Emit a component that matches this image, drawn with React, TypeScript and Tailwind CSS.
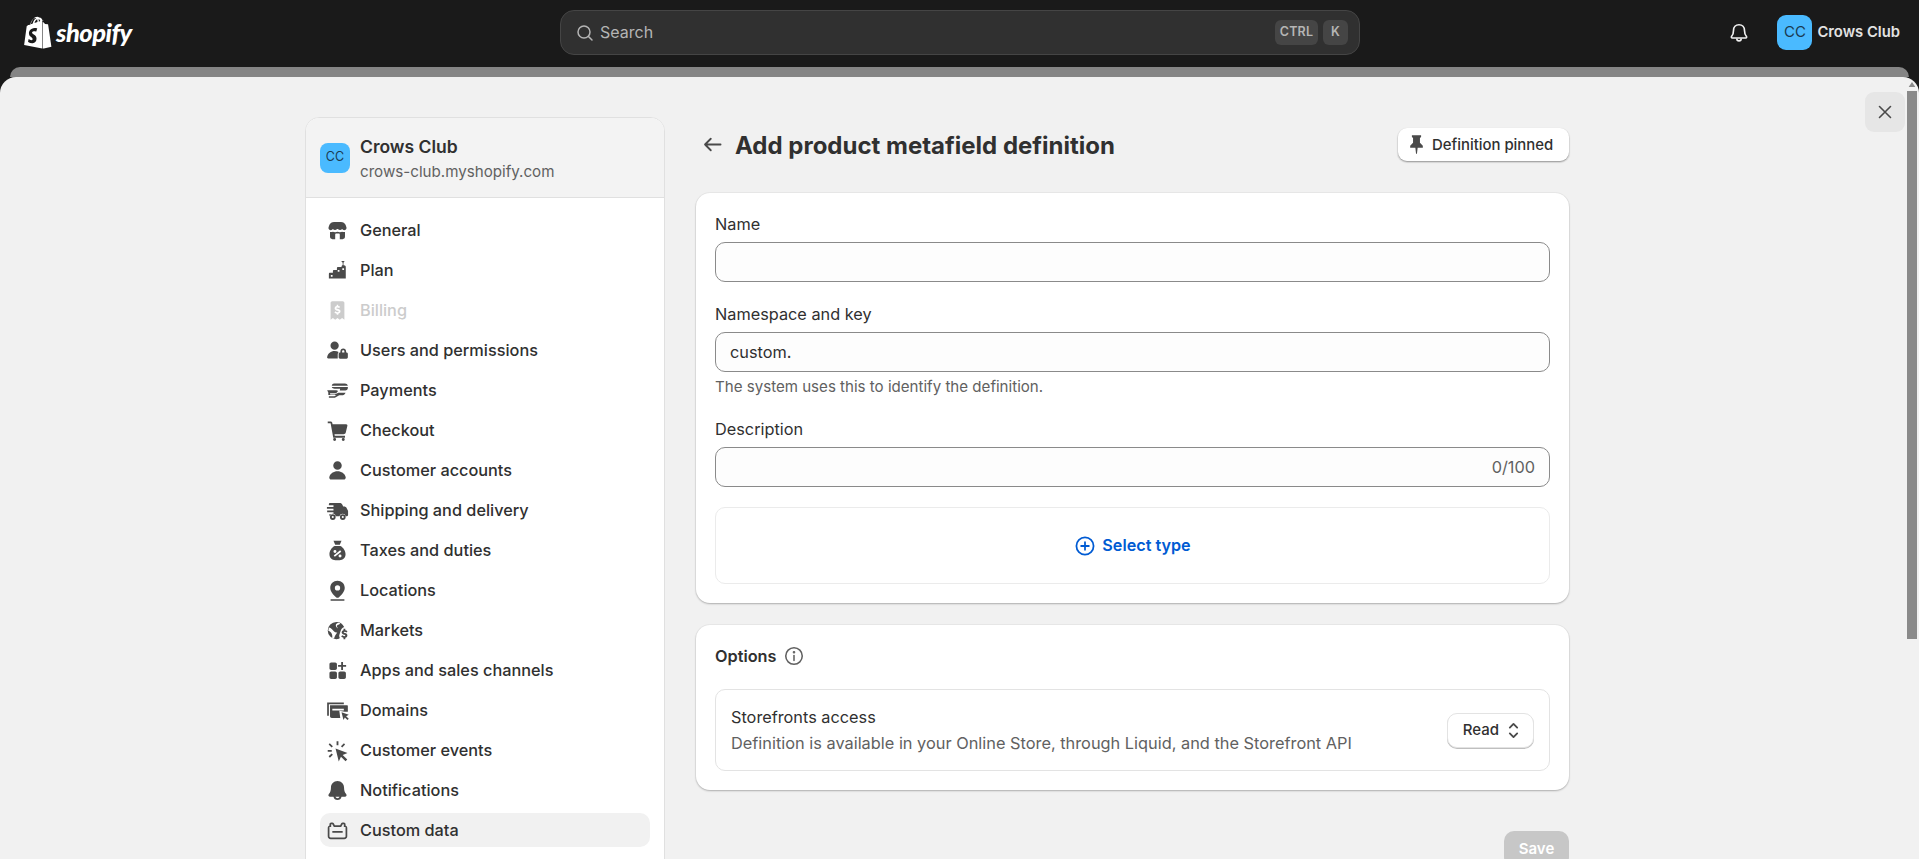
import React from "react";

const font = "[font-family:Inter,'Liberation_Sans',sans-serif]";

const Fill = ({ d, className = "" }: { d: string; className?: string }) => (
  <svg viewBox="0 0 20 20" className={`h-[23px] w-[23px] shrink-0 ${className}`} fill="currentColor">
    <path fillRule="evenodd" clipRule="evenodd" d={d} />
  </svg>
);

const items: { label: string; d: string; disabled?: boolean; active?: boolean }[] = [
  { label: "General", d: "M7 2.500h6c2 0 3.300 1 4 2.600l.7 1.900c.3.900.1 1.600-.4 2.100-.9.900-2.600.800-3.300-.3-.8 1.100-2.800 1.100-3.600 0h-.8c-.8 1.100-2.800 1.100-3.600 0-.7 1.100-2.400 1.200-3.300.3-.5-.5-.7-1.200-.4-2.100L3 5.100C3.700 3.500 5 2.500 7 2.500ZM3.500 11.300c.9.200 1.800.100 2.500-.3.900.5 2.800.6 4 0 1.200.6 3.100.5 4 0 .7.400 1.600.500 2.500.3V15.500c0 1.100-.9 2-2 2h-9c-1.100 0-2-.9-2-2V11.300ZM8 13.500V17.500h4V13.500c0-.6-.4-1-1-1H9c-.6 0-1 .4-1 1Z" },
  { label: "Plan", d: "M13.200 1.800h3l-1 1.400v2.300h.5c.8 0 1.500.7 1.500 1.500v10H2.500V13c0-.6.400-1 1-1h2.500V10.500c0-.6.400-1 1-1H9.500V8c0-.6.400-1 1-1h3V6.800c0-.7.300-1.300 1-1.300V3.200l-1.300-1.400ZM4.200 14v1.500h1.500V14H4.200Zm6-4.500V11h1.500V9.500H10.200Zm4-1.500v1.500h1.500V8H14.200Z" },
  { label: "Billing", disabled: true, d: "M4 3.500c0-.8.700-1.500 1.500-1.500h9c.8 0 1.500.700 1.500 1.500V18l-2-1.500-2 1.500-2-1.500L8 18l-2-1.500L4 18V3.500ZM9.300 5v1c-1.100.2-1.800 1-1.800 2 0 1.200.9 1.800 2.400 2.200.9.200 1.100.4 1.100.7s-.4.600-1 .6c-.7 0-1.300-.3-1.800-.8l-.9 1.100c.5.500 1.200.9 2 1v1h1.400v-1c1.200-.2 1.900-1 1.900-2.100 0-1.200-.9-1.800-2.500-2.200-.8-.2-1.100-.4-1.100-.7s.3-.5.900-.5c.5 0 1.100.2 1.600.6l.8-1.100c-.5-.4-1.100-.7-1.700-.8V5H9.300Z" },
  { label: "Users and permissions", d: "M7.500 2.200a3.600 3.600 0 1 1 0 7.200 3.600 3.600 0 0 1 0-7.200ZM7.500 10.500c1.300 0 2.500.3 3.500.8-.5.500-.8 1.200-.8 1.900v3.800H2c-.8 0-1.200-.6-1-1.300.6-3.100 3.200-5.200 6.500-5.200ZM15 8.300c1.400 0 2.500 1.100 2.500 2.500V11.700h.3c.7 0 1.200.6 1.200 1.200v3c0 .7-.5 1.200-1.200 1.200H12.200c-.7 0-1.200-.5-1.200-1.200v-3c0-.6.500-1.200 1.200-1.200h.3V10.800c0-1.400 1.100-2.500 2.500-2.500ZM14 11.700h2V10.800c0-.6-.4-1-1-1s-1 .4-1 1V11.700Z" },
  { label: "Payments", d: "M7 4h9.500c1.200 0 2.200.7 2.500 1.800H5c.3-1.100 1-1.800 2-1.800ZM5 7h14v.8c0 1.200-1 2.200-2.200 2.200H12l.3-1.500H7.500C6.300 8.500 5.300 8 5 7ZM1 9.700h6.500c1 0 1.800.1 2.400.2.500.1.500.9-.1 1.500l-1 1H3.500l.2 1H7.500l3.300-1.500H17c-.4 1.400-1.800 2.300-3.500 2.300h-2l-3.800 2H2.500v-1.300h4.800l1.700-1H2V11.800L1 9.700Z" },
  { label: "Checkout", d: "M1.500 2.200H4c.7 0 1.300.5 1.500 1.200L5.700 4.500H17.500c.8 0 1.300.7 1.100 1.400l-1.400 5.900c-.2.9-1 1.500-1.900 1.500H7.400l.2 1.200H16.500V16.200H6.300L4 3.700H1.500V2.200ZM7.500 16.500a1.300 1.300 0 1 1 0 2.600 1.300 1.300 0 0 1 0-2.600Zm7.500 0a1.300 1.300 0 1 1 0 2.600 1.300 1.300 0 0 1 0-2.600Z" },
  { label: "Customer accounts", d: "M10 2a3.700 3.700 0 1 1 0 7.400A3.700 3.700 0 0 1 10 2ZM10 10.700c3.500 0 6.300 2 7.100 4.900.3 1.100-.5 2.300-1.700 2.300H4.600c-1.200 0-2-1.200-1.700-2.300.8-2.900 3.600-4.900 7.100-4.900Z" },
  { label: "Shipping and delivery", d: "M6.500 3.500h5.500c.9 0 1.700.5 2.100 1.300l.9 1.700h.7c1 0 1.800.5 2.200 1.300l1 2c.2.300.3.600.3 1V14c0 .6-.4 1-1 1h-.9a2.900 2.900 0 0 0-5.600 0H8.700a2.900 2.900 0 0 0-5.600 0H3v-2h3.500v-1.500H1V10h5.500V8.500H.8V7H6.500V5.500H2.500V4.500C2.500 4 3 3.500 3.500 3.500H6.500ZM5.900 13.200a2.500 2.500 0 1 1 0 5 2.500 2.500 0 0 1 0-5Zm0 1.600a.9.900 0 1 0 0 1.800.9.900 0 0 0 0-1.800ZM14.600 13.200a2.500 2.500 0 1 1 0 5 2.500 2.500 0 0 1 0-5Zm0 1.600a.9.900 0 1 0 0 1.800.9.900 0 0 0 0-1.800Z" },
  { label: "Taxes and duties", d: "M6.500 1.500h7l-1.500 3.500h-4L6.500 1.500ZM7.500 6h5c2.500 1.200 4.500 4.200 4.500 7.300 0 3-2.200 5.200-5.200 5.200H8.200C5.200 18.500 3 16.300 3 13.300 3 10.200 5 7.200 7.500 6ZM12.300 9.800 6.700 14.300l1 1.200 5.600-4.500-1-1.200ZM7.800 9.500a1.300 1.300 0 1 0 0 2.600 1.300 1.300 0 0 0 0-2.600Zm4.400 4a1.300 1.300 0 1 0 0 2.600 1.300 1.300 0 0 0 0-2.600Z" },
  { label: "Locations", d: "M10 1.500c3.600 0 6.300 2.700 6.300 6.200 0 3.300-2.700 6.300-5 8.200-.8.600-1.800.6-2.600 0-2.300-1.900-5-4.900-5-8.200C3.700 4.200 6.400 1.500 10 1.500ZM10 5.500a2.300 2.300 0 1 0 0 4.600 2.300 2.300 0 0 0 0-4.600ZM4 17.500h12V19H4V17.500Z" },
  { label: "Markets", d: "M9 2.500A7.500 7.500 0 0 0 9 17.500c.8 0 1.600-.1 2.300-.4l.7-.6c-.5-1-.7-2-.3-3l.8-2.500c.5-2 1.500-3 2.100-3.500l1.200-.5A7.500 7.500 0 0 0 9 2.500ZM2.600 7.300c2 .5 3 2 4 3.200s2 1.500 3.200 1c-.9 1.800-2.300 3-2.800 5.500L5.400 16.500C5.900 14 5 11.500 2 10.300L2.600 7.300ZM12.500 4c-1 1-2.500 1-3 2 0 .8.700 1.300.8 2.300C9.300 7.800 8.500 6.500 8.500 5.300 8.500 4 10 3.300 11 3.200L12.500 4ZM15.200 8.500h1.600v1.200c.8.100 1.400.4 1.900.9l-.9 1.100c-.5-.4-1-.6-1.600-.6-.5 0-.8.2-.8.5s.3.400 1 .6c1.300.3 2.200.9 2.200 2.100 0 1-.7 1.800-1.800 2v1.200h-1.600v-1.200c-.8-.1-1.500-.5-2-1l.9-1.100c.5.400 1.100.7 1.700.7.600 0 1-.2 1-.6s-.3-.5-1.200-.7c-1.200-.3-2-.9-2-2 0-1 .7-1.700 1.600-1.900V8.500Z" },
  { label: "Apps and sales channels", d: "M4.500 3h3.500c.8 0 1.500.7 1.500 1.500V8c0 .8-.7 1.500-1.500 1.500H4.500C3.700 9.500 3 8.800 3 8V4.500C3 3.700 3.700 3 4.500 3ZM4.500 10.800H8c.8 0 1.500.7 1.500 1.500v3.500c0 .8-.7 1.500-1.500 1.500H4.500C3.700 17.300 3 16.600 3 15.800V12.300c0-.8.700-1.500 1.500-1.500ZM12.300 10.800h3.500c.8 0 1.500.7 1.500 1.500v3.500c0 .8-.7 1.500-1.500 1.500H12.300c-.8 0-1.500-.7-1.500-1.500V12.300c0-.8.700-1.500 1.500-1.500ZM13.200 2.500h1.600V5.200h2.700V6.800H14.800V9.500H13.200V6.800H10.500V5.200H13.200V2.500Z" },
  { label: "Domains", d: "M1 3h14.500v1.500H2.500V14.500H1V3ZM3.500 5.500h15c.3 0 .5.200.5.500v5h-2.800l-4.600-.8.800 6.300H5c-.8 0-1.500-.7-1.500-1.500V5.500Zm2 3V10h10V8.500h-10Zm8 3 6.300 2.300-2.300 1.100 2.300 2.300-1.100 1.100-2.300-2.300-1.200 2.300-1.700-6.800Z" },
  { label: "Customer events", d: "M9.200 2h1.600v3.500H9.200V2ZM3.300 3.700 6 6.300 4.900 7.400 2.300 4.800l1-1.100ZM15.600 3.700l1 1.100-2.500 2.500-1.100-1.100 2.600-2.500ZM1.500 9.500H5V11H1.500V9.500ZM8.300 8.200l10.400 3.900-4.200 1.800 4 4-1.500 1.500-4-4-1.900 4.200L8.300 8.200ZM4.900 12.500l1.100 1.100-2.600 2.600-1.100-1.100 2.600-2.600Z" },
  { label: "Notifications", d: "M10 1.700c3.400 0 5.700 2.600 5.700 5.800 0 2.300.5 3.900 1.800 5.500.9 1 .3 2.500-1.100 2.500h-2.900a3.600 3.600 0 0 1-7 0H3.600c-1.400 0-2-1.500-1.100-2.500 1.300-1.600 1.800-3.200 1.800-5.500 0-3.200 2.300-5.800 5.700-5.800ZM8.200 15.500a1.900 1.900 0 0 0 3.600 0H8.200Z" },
  { label: "Custom data", active: true, d: "M4.500 3h1c.6 0 1 .3 1.300.8L7.700 5.500h4.600l.9-1.700c.3-.5.700-.8 1.300-.8h1c.8 0 1.500.7 1.500 1.500v1.100c1 .4 1.500 1.200 1.500 2.200V15c0 1.400-1.100 2.500-2.500 2.500H4c-1.400 0-2.500-1.100-2.500-2.500V7.800c0-1 .5-1.800 1.500-2.200V4.500C3 3.700 3.700 3 4.500 3ZM4.500 4.500V7H3V15c0 .6.400 1 1 1h12c.6 0 1-.4 1-1V7H15.500V4.500h-1l-1.300 2.500H6.800L5.500 4.500H4.500ZM5.500 10.500h9V12h-9V10.500Z" },
];

function Field({ label, value, right, help }: { label: string; value?: string; right?: string; help?: string }) {
  return (
    <div>
      <div className="h-5 text-[16.3px] leading-5 text-[#303030]">{label}</div>
      <div className="mt-2 flex h-10 items-center justify-between rounded-[10px] border border-[#8a8a8a] bg-[#fdfdfd] px-[14px] text-[16.3px] text-[#303030]">
        <span>{value}</span>
        {right && <span className="text-[#616161]">{right}</span>}
      </div>
      {help && <div className="mt-[5px] h-5 text-[15.1px] leading-5 text-[#616161]">{help}</div>}
    </div>
  );
}

function Header() {
  return (
    <header className="flex h-[67px] shrink-0 items-center pb-[2px] pl-[23px] pr-[19px]">
      <div className="flex w-[537px] items-center gap-[3px]">
        <svg viewBox="0 0 28 32" className="h-[34px] w-[30px] shrink-0" fill="#fff">
          <path d="M19.800 4.200c-.1 0-.3 0-.4.100l-1 .3C17.900 3 17 1.500 15.300 1.500h-.2C14.600.9 14 .6 13.500.6 9.600.6 7.700 5.500 7.100 8c-1.500.5-2.600.8-2.800.9-.8.300-.9.300-1 1.100C3.200 10.600 1 27.400 1 27.400l17 3.200V4.300l1.800-.1ZM13.500 5.700l-2.800.9c.5-2.100 1.600-3.100 2.500-3.500.2.600.3 1.400.3 2.300v.3Zm-1.700-3.900c.2 0 .3.100.5.200-1.300.6-2.600 2-3.200 5-.9.300-1.700.5-2.400.8.600-2.300 2.300-6 5.100-6Zm3 3.500v-.2c0-.9-.1-1.600-.3-2.200.8.100 1.300 1 1.600 1.900l-1.300.5ZM19.500 30.600l7.200-1.600S23.600 8.100 23.500 8c0-.2-.2-.3-.3-.3l-2.500-.2-1.700-1.700c-.1-.1-.4-.1-.5 0v24.800Z" />
          <path fill="#1a1a1a" d="M13.300 11.500l-.9 3.200s-1-.5-2.200-.4c-1.700.1-1.800 1.200-1.800 1.500.1 1.500 3.900 1.800 4.200 5.200.2 2.700-1.400 4.600-3.700 4.700-2.800.2-4.300-1.500-4.300-1.500l.6-2.500s1.500 1.100 2.700 1.100c.8-.1 1.100-.7 1-1.200-.1-1.900-3.200-1.800-3.400-4.900-.2-2.600 1.500-5.200 5.300-5.500 1.500-.1 2.500.3 2.500.3Z" />
        </svg>
        <span className="text-[25.5px] font-black italic leading-none tracking-[-0.5px] text-white [font-family:Lato,sans-serif]">shopify</span>
      </div>
      <div className="flex h-[45px] w-[800px] items-center rounded-[14px] border border-[#454545] bg-[#303030] pl-[14px] pr-[11px]">
        <svg viewBox="0 0 20 20" className="h-[20px] w-[20px] text-[#b5b5b5]" fill="none" stroke="currentColor" strokeWidth="1.5" strokeLinecap="round">
          <circle cx="9" cy="9" r="6" />
          <path d="M13.500 13.500L17 17" />
        </svg>
        <span className="ml-[5px] flex-1 pb-[1px] text-[16px] text-[#b5b5b5]">Search</span>
        <span className="flex h-[25px] w-[43px] items-center justify-center rounded-[6px] bg-[#454545] text-[12.5px] font-semibold tracking-[0.2px] text-[#b5b5b5]">CTRL</span>
        <span className="ml-[5px] flex h-[25px] w-[25px] items-center justify-center rounded-[6px] bg-[#454545] text-[12.5px] font-semibold text-[#b5b5b5]">K</span>
      </div>
      <div className="flex flex-1 items-center justify-end">
        <svg viewBox="0 0 20 20" className="h-[22px] w-[22px] text-[#f1f1f1]" fill="none" stroke="currentColor" strokeWidth="1.5" strokeLinejoin="round">
          <path d="M10 2.500c-3 0-5 2.200-5 5.200 0 2.300-.5 4-1.700 5.300-.5.600-.2 1.500.6 1.500h12.200c.8 0 1.100-.9.600-1.500C15.500 11.700 15 10 15 7.700c0-3-2-5.200-5-5.200Z" />
          <path d="M8 15c0 1.200.9 2.200 2 2.200s2-1 2-2.200" />
        </svg>
        <div className="ml-[27px] flex h-[35px] w-[35px] items-center justify-center rounded-[9px] bg-[#4abaff] text-[15px] text-[#1a3a52]">CC</div>
        <span className="ml-[5px] text-[14.8px] font-semibold text-[#e3e3e3]">Crows Club</span>
      </div>
    </header>
  );
}

function Sidebar() {
  return (
    <aside className="h-[760px] w-[360px] shrink-0 overflow-hidden rounded-t-[14px] border border-[#e0e0e0] bg-white">
      <div className="flex h-[80px] items-center gap-[10px] border-b border-[#e0e0e0] bg-[#f3f3f3] pl-[14px]">
        <div className="flex h-[30px] w-[30px] items-center justify-center rounded-[8px] bg-[#4abaff] text-[12.5px] text-[#1a3a52]">CC</div>
        <div className="pt-[3px]">
          <div className="text-[17.5px] font-semibold leading-[24px] text-[#303030]">Crows Club</div>
          <div className="mt-[2px] text-[15.15px] leading-[22px] text-[#616161]">crows-club.myshopify.com</div>
        </div>
      </div>
      <nav className="flex flex-col gap-[6px] px-[14px] pt-[15px]">
        {items.map((it) => (
          <div
            key={it.label}
            className={`flex h-[34px] items-center gap-[11px] rounded-[10px] px-[6px] text-[16.3px] font-medium ${
              it.active ? "bg-[#f1f1f1] text-[#303030]" : it.disabled ? "text-[#cccccc]" : "text-[#303030]"
            }`}
          >
            <Fill d={it.d} className={it.disabled ? "text-[#cccccc]" : "text-[#4a4a4a]"} />
            <span>{it.label}</span>
          </div>
        ))}
      </nav>
    </aside>
  );
}

function Main() {
  const card = "rounded-[14px] bg-white shadow-[0_0_0_1px_rgba(0,0,0,0.03),0_1px_2px_0_rgba(0,0,0,0.25)]";
  return (
    <main className="w-[873px] shrink-0 pt-[11px]">
      <div className="flex h-[33px] items-center">
        <svg viewBox="0 0 20 20" className="ml-[5px] h-[23px] w-[23px] text-[#4a4a4a]" fill="none" stroke="currentColor" strokeWidth="1.6" strokeLinecap="round" strokeLinejoin="round">
          <path d="M17 10H3.500M8.500 5l-5 5 5 5" />
        </svg>
        <h1 className="ml-[11px] flex-1 pt-[2px] text-[24px] font-bold leading-none text-[#303030]">Add product metafield definition</h1>
        <div className="flex h-[33px] w-[171px] items-center gap-[4px] rounded-[9px] bg-white pl-[7px] text-[14.9px] font-medium text-[#303030] shadow-[0_1px_1px_1px_rgba(0,0,0,0.12),0_1px_0_0_rgba(0,0,0,0.2)]">
          <svg viewBox="0 0 20 20" className="h-[23px] w-[23px] text-[#4a4a4a]" fill="currentColor">
            <path d="M6 2h8v1.500l-1 .8V8.500l2.500 2.500V12.800H11l-.6 5.200h-.8L9 12.800H4.500V11L7 8.500V4.300L6 3.500V2Z" />
          </svg>
          <span className="pt-[1px]">Definition pinned</span>
        </div>
      </div>

      <section className={`${card} mt-[32px] px-[19px] pb-[19px] pt-[21px]`}>
        <Field label="Name" />
        <div className="mt-[22px]">
          <Field label="Namespace and key" value="custom." help="The system uses this to identify the definition." />
        </div>
        <div className="mt-[22px]">
          <Field label="Description" right="0/100" />
        </div>
        <div className="mt-[20px] flex h-[77px] items-center justify-center gap-[6px] rounded-[10px] border border-[#ebebeb] text-[16.2px] font-semibold text-[#005bd3]">
          <svg viewBox="0 0 20 20" className="h-[22px] w-[22px]" fill="none" stroke="currentColor" strokeWidth="1.6" strokeLinecap="round">
            <circle cx="10" cy="10" r="7.800" />
            <path d="M10 6.500v7M6.500 10h7" />
          </svg>
          Select type
        </div>
      </section>

      <section className={`${card} mt-[22px] px-[19px] pb-[19px] pt-[21px]`}>
        <div className="flex h-5 items-center gap-[6px] text-[16.3px] font-semibold text-[#303030]">
          Options
          <svg viewBox="0 0 20 20" className="h-[22px] w-[22px] text-[#616161]" fill="none" stroke="currentColor" strokeWidth="1.4" strokeLinecap="round">
            <circle cx="10" cy="10" r="7.500" />
            <path d="M10 9.500v4.500" />
            <circle cx="10" cy="6.600" r=".5" fill="currentColor" />
          </svg>
        </div>
        <div className="mt-[23px] flex h-[82px] items-center justify-between rounded-[10px] border border-[#e3e3e3] pl-[15px] pr-[15px]">
          <div>
            <div className="h-5 text-[16.3px] leading-[19px] text-[#303030]">Storefronts access</div>
            <div className="mt-[5px] h-5 text-[16.35px] leading-5 text-[#616161]">Definition is available in your Online Store, through Liquid, and the Storefront API</div>
          </div>
          <div className="flex h-[35px] w-[87px] items-center justify-center gap-[3px] rounded-[10px] border border-[#e3e3e3] bg-white pl-[7px] text-[15px] font-medium text-[#303030] shadow-[0_1px_0_0_rgba(0,0,0,0.25)]">
            Read
            <svg viewBox="0 0 20 20" className="h-[23px] w-[23px] text-[#4a4a4a]" fill="none" stroke="currentColor" strokeWidth="1.6" strokeLinecap="round" strokeLinejoin="round">
              <path d="M6.800 7.500L10 4.300 13.200 7.500M6.800 12.500L10 15.700 13.200 12.500" />
            </svg>
          </div>
        </div>
      </section>

      <div className="mt-[41px] flex justify-end">
        <div className="flex h-[36px] w-[65px] items-center justify-center rounded-[10px] bg-[#c7c7c7] text-[15px] font-semibold text-white">Save</div>
      </div>
    </main>
  );
}

export default function App() {
  return (
    <div className={`flex h-[859px] w-full flex-col overflow-hidden bg-[#1a1a1a] ${font}`}>
      <Header />
      <div className="mx-[10px] h-[10px] shrink-0 rounded-t-[12px] bg-[#858585]" />
      <div className="relative flex min-h-0 flex-1 overflow-hidden rounded-t-[16px] bg-[#f1f1f1]">
        <div className="flex min-w-0 flex-1 gap-[31px] pl-[305px] pt-[40px]">
          <Sidebar />
          <Main />
        </div>
        <div className="w-[12px] shrink-0 pr-[2px]">
          <svg viewBox="0 0 10 6" className="mt-[5px] h-[5px] w-[10px] text-[#8a8a8a]" fill="currentColor">
            <path d="M5 0l4 6H1z" />
          </svg>
          <div className="mt-[4px] h-[548px] w-[10px] bg-[#8a8a8a]" />
        </div>
        <div className="absolute right-[14px] top-[15px] flex h-10 w-10 items-center justify-center rounded-[9px] bg-[#e6e6e6]">
          <svg viewBox="0 0 20 20" className="h-5 w-5 text-[#4a4a4a]" fill="none" stroke="currentColor" strokeWidth="1.6" strokeLinecap="round">
            <path d="M4.500 4.500l11 11M15.500 4.500l-11 11" />
          </svg>
        </div>
      </div>
    </div>
  );
}
